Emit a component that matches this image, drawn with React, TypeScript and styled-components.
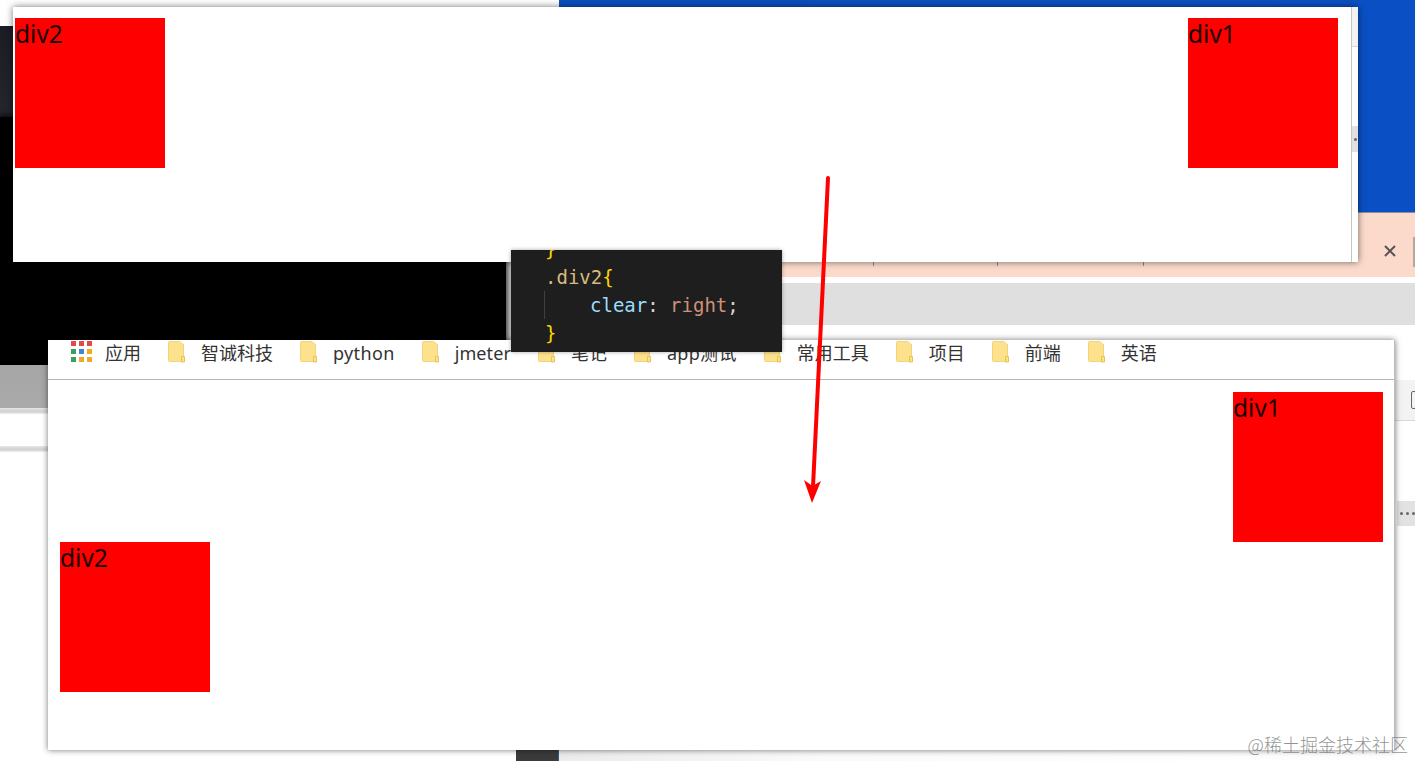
import styled, { createGlobalStyle } from "styled-components";

const GlobalStyle = createGlobalStyle`
  html, body {
    margin: 0;
    padding: 0;
    background: #fff;
  }
`;

const Desktop = styled.div`
  position: relative;
  width: 1415px;
  height: 761px;
  overflow: hidden;
  background: #fff;
  font-family: "Noto Sans", "Noto Sans CJK SC", sans-serif;
`;

// everything peeking out behind the two browser windows
const Backdrop = styled.div`
  display: flex;
  height: 100%;
`;

const LeftStack = styled.div`
  width: 559px;
  display: flex;
  flex-direction: column;
  padding-top: 26px;
  box-sizing: border-box;
`;

const DarkTab = styled.div`
  width: 40px;
  height: 91px;
  background: linear-gradient(180deg, #1b1d24, #24262e);
`;

const BlackSheet = styled.div`
  width: 506px;
  height: 248px;
  background: #000;
  box-shadow: 1px 0 5px 2px rgba(0, 0, 0, 0.7);
`;

const GrayStrip = styled.div`
  width: 60px;
  height: 43px;
  background: linear-gradient(180deg, #a6a6a6, #aaa);
`;

const StripLine = styled.div`
  width: 60px;
  height: 6px;
  margin-bottom: 32px;
  background: linear-gradient(180deg, #e6e6e6, #d0d0d0 60%, #f0f0f0);
`;

const BottomDark = styled.div`
  width: 42px;
  height: 11px;
  margin: auto 0 0 516px;
  background: #3b3b3b;
  border-right: 1px solid #2a5c8f;
`;

const RightStack = styled.div`
  flex: 1;
  display: flex;
  flex-direction: column;
`;

const BlueWall = styled.div`
  height: 212px;
  background: linear-gradient(90deg, #0b50bd, #0a50c4);
  border-bottom: 1px solid #8a8f9c;
`;

const PeachBar = styled.div`
  height: 64px;
  display: flex;
  align-items: flex-start;
  padding-left: 314px;
  background: #fbdacb;
`;

const TickCell = styled.div<{ $w: number }>`
  width: ${({ $w }) => $w}px;
  height: 53px;
  flex: none;
  background: linear-gradient(#9a8a80, #9a8a80) 0 49px / 1px 4px no-repeat;
`;

const CloseMark = styled.div`
  margin: 32px 17px 0 auto;
  line-height: 0;
`;

const PeachDivider = styled.div`
  width: 2px;
  height: 30px;
  margin-top: 24px;
  background: #b5a79f;
`;

const GrayBand = styled.div`
  height: 42px;
  margin-top: 6px;
  background: #dfdfdf;
`;

const SideColumn = styled.div`
  width: 20px;
  margin-top: 55px;
  align-self: flex-end;
  display: flex;
  flex-direction: column;
  align-items: flex-end;
  gap: 80px;
`;

const SideToolbar = styled.div`
  width: 20px;
  height: 40px;
  display: flex;
  align-items: center;
  justify-content: flex-end;
  background: #f3f3f3;
  border-bottom: 1px solid #d8d8d8;
`;

const SideCheck = styled.span`
  width: 8px;
  height: 16px;
  margin-right: -6px;
  border: 1px solid #666;
  border-radius: 2px;
`;

const MoreButton = styled.div`
  width: 18px;
  height: 25px;
  display: flex;
  align-items: center;
  gap: 3px;
  padding-left: 3px;
  box-sizing: border-box;
  background: #e2e2e2;
`;

const MoreDot = styled.span`
  width: 3px;
  height: 3px;
  flex: none;
  border-radius: 50%;
  background: #666;
`;

const BottomLight = styled.div`
  height: 11px;
  margin-top: auto;
  background: linear-gradient(90deg, #ececec, #fafafa 30%, #fff);
`;

// browser windows
const TopWindow = styled.div`
  position: absolute;
  left: 13px;
  top: 7px;
  width: 1345px;
  height: 255px;
  display: flex;
  background: #fff;
  box-shadow: 0 0 7px rgba(0, 0, 0, 0.55);
`;

const TopPage = styled.div`
  flex: 1;
  display: flex;
  justify-content: space-between;
  align-items: flex-start;
  padding: 11px 13px 0 2px;
`;

const ScrollRail = styled.div`
  width: 6px;
  display: flex;
  flex-direction: column;
  border-left: 1px solid #c4c4c4;
`;

const ScrollCap = styled.div`
  height: 39px;
  margin-bottom: 79px;
  background: #f2f2f2;
  border-bottom: 1px solid #d6d6d6;
`;

const ScrollHandle = styled.div`
  height: 26px;
  display: flex;
  align-items: center;
  padding-left: 2px;
  background: #e0e0e0;
`;

const LowerWindow = styled.div`
  position: absolute;
  left: 48px;
  top: 340px;
  width: 1347px;
  height: 410px;
  background: #fff;
  box-shadow: 0 0 6px rgba(0, 0, 0, 0.55);
  border-right: 1px solid #bdbdbd;
  box-sizing: border-box;
`;

const BookmarkBar = styled.div`
  display: flex;
  align-items: flex-start;
  gap: 27px;
  height: 39px;
  padding-left: 23px;
  border-bottom: 1px solid #b4b4b4;
`;

const Bookmark = styled.div<{ $gap: number }>`
  display: flex;
  align-items: flex-start;
  gap: ${({ $gap }) => $gap}px;
  padding-top: 1px;
  font-size: 18px;
  line-height: 25px;
  color: #333;
  white-space: nowrap;
`;

const BookmarkLabel = styled.span<{ $track?: number }>`
  letter-spacing: ${({ $track }) => $track ?? 0}px;
`;

const AppsGrid = styled.div`
  display: grid;
  grid-template-columns: repeat(3, 5px);
  grid-auto-rows: 5px;
  gap: 3px;
`;

const AppsCell = styled.span<{ $color: string }>`
  background: ${({ $color }) => $color};
`;

const LowerPage = styled.div`
  padding: 12px 11px 0 12px;
`;

const RedBox = styled.div<{ $float?: "right" }>`
  width: 150px;
  height: 150px;
  background: #f00;
  color: #1a0000;
  font-size: 24.5px;
  line-height: 32px;
  float: ${({ $float }) => $float ?? "none"};
  clear: ${({ $float }) => ($float ? "none" : "right")};
`;

// pasted editor snippet
const CodePanel = styled.div`
  position: absolute;
  left: 511px;
  top: 250px;
  width: 271px;
  height: 102px;
  overflow: hidden;
  background: #1e1e1e;
  box-shadow: 0 0 4px rgba(0, 0, 0, 0.35);
  font-family: "DejaVu Sans Mono", monospace;
  font-size: 19px;
`;

const CodeBody = styled.div`
  margin-top: -15px;
  padding-left: 33px;
`;

const CodeLine = styled.div<{ $indent?: boolean }>`
  height: 28px;
  line-height: 28px;
  white-space: pre;
  padding-left: ${({ $indent }) => ($indent ? "45px" : "0")};
  border-left: 1px solid ${({ $indent }) => ($indent ? "#404040" : "transparent")};
`;

const Tok = styled.span<{ $c: string }>`
  color: ${({ $c }) => $c};
`;

const ArrowLayer = styled.svg`
  position: absolute;
  left: 790px;
  top: 165px;
`;

const Watermark = styled.div`
  position: absolute;
  right: 7px;
  top: 731px;
  font-family: "Noto Sans CJK SC", sans-serif;
  font-size: 18px;
  line-height: 26px;
  font-weight: 300;
  color: rgba(110, 110, 110, 0.75);
  white-space: nowrap;
`;

const FolderIcon = () => (
  <svg width="18" height="22" viewBox="0 0 18 22">
    <path d="M.5 1.5a1 1 0 0 1 1-1h10l4 3v17h-14a1 1 0 0 1-1-1z" fill="#fde28e" stroke="#f3d374" />
    <path d="M13.5 15.5h3v5.5h-3z" fill="#fde28e" stroke="#e8c35a" />
  </svg>
);

const appsColors = [
  "#e8474a", "#e8474a", "#e8474a",
  "#3aa05c", "#3d86dd", "#efaa25",
  "#3aa05c", "#efaa25", "#efaa25",
];

const folders: { name: string; track?: number }[] = [
  { name: "智诚科技" },
  { name: "python", track: 0.35 },
  { name: "jmeter", track: 0.1 },
  { name: "笔记" },
  { name: "app测试", track: 0.3 },
  { name: "常用工具" },
  { name: "项目" },
  { name: "前端" },
  { name: "英语" },
];

export default function App() {
  return (
    <Desktop>
      <GlobalStyle />

      <Backdrop>
        <LeftStack>
          <DarkTab />
          <BlackSheet />
          <GrayStrip />
          <StripLine />
          <StripLine />
          <BottomDark />
        </LeftStack>
        <RightStack>
          <BlueWall />
          <PeachBar>
            <TickCell $w={124} />
            <TickCell $w={146} />
            <TickCell $w={1} />
            <CloseMark>
              <svg width="12" height="12" viewBox="0 0 12 12">
                <path d="M1 1l10 10M11 1L1 11" stroke="#555" strokeWidth="2" />
              </svg>
            </CloseMark>
            <PeachDivider />
          </PeachBar>
          <GrayBand />
          <SideColumn>
            <SideToolbar>
              <SideCheck />
            </SideToolbar>
            <MoreButton>
              <MoreDot />
              <MoreDot />
              <MoreDot />
            </MoreButton>
          </SideColumn>
          <BottomLight />
        </RightStack>
      </Backdrop>

      <TopWindow>
        <TopPage>
          <RedBox>div2</RedBox>
          <RedBox>div1</RedBox>
        </TopPage>
        <ScrollRail>
          <ScrollCap />
          <ScrollHandle>
            <MoreDot />
          </ScrollHandle>
        </ScrollRail>
      </TopWindow>

      <LowerWindow>
        <BookmarkBar>
          <Bookmark $gap={13}>
            <AppsGrid>
              {appsColors.map((c, i) => (
                <AppsCell key={i} $color={c} />
              ))}
            </AppsGrid>
            <BookmarkLabel>应用</BookmarkLabel>
          </Bookmark>
          {folders.map((f) => (
            <Bookmark key={f.name} $gap={15}>
              <FolderIcon />
              <BookmarkLabel $track={f.track}>{f.name}</BookmarkLabel>
            </Bookmark>
          ))}
        </BookmarkBar>
        <LowerPage>
          <RedBox $float="right">div1</RedBox>
          <RedBox>div2</RedBox>
        </LowerPage>
      </LowerWindow>

      <CodePanel>
        <CodeBody>
          <CodeLine>
            <Tok $c="#ffd700">{"}"}</Tok>
          </CodeLine>
          <CodeLine>
            <Tok $c="#d7ba7d">.div2</Tok>
            <Tok $c="#ffd700">{"{"}</Tok>
          </CodeLine>
          <CodeLine $indent>
            <Tok $c="#9cdcfe">clear</Tok>
            <Tok $c="#d4d4d4">: </Tok>
            <Tok $c="#ce9178">right</Tok>
            <Tok $c="#d4d4d4">;</Tok>
          </CodeLine>
          <CodeLine>
            <Tok $c="#ffd700">{"}"}</Tok>
          </CodeLine>
        </CodeBody>
      </CodePanel>

      <ArrowLayer width="50" height="345" viewBox="0 0 50 345">
        <path d="M38 13L23 322" stroke="#f00" strokeWidth="4" strokeLinecap="round" fill="none" />
        <path d="M14 315L22 338L31 316L22.5 321z" fill="#f00" />
      </ArrowLayer>

      <Watermark>@稀土掘金技术社区</Watermark>
    </Desktop>
  );
}
